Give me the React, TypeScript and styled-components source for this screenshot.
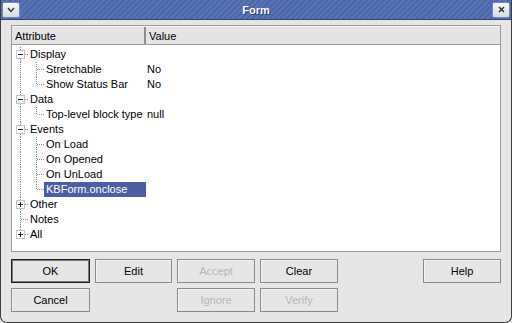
import styled, { createGlobalStyle } from 'styled-components';

type Guide = 'pipe' | 'tee' | 'elbow';

interface Node {
  label: string;
  value?: string;
  guides: Guide[];
  expander?: '+' | '-';
  selected?: boolean;
}

const nodes: Node[] = [
  { label: 'Display', guides: ['tee'], expander: '-' },
  { label: 'Stretchable', value: 'No', guides: ['pipe', 'tee'] },
  { label: 'Show Status Bar', value: 'No', guides: ['pipe', 'elbow'] },
  { label: 'Data', guides: ['tee'], expander: '-' },
  { label: 'Top-level block type', value: 'null', guides: ['pipe', 'elbow'] },
  { label: 'Events', guides: ['tee'], expander: '-' },
  { label: 'On Load', guides: ['pipe', 'tee'] },
  { label: 'On Opened', guides: ['pipe', 'tee'] },
  { label: 'On UnLoad', guides: ['pipe', 'tee'] },
  { label: 'KBForm.onclose', guides: ['pipe', 'elbow'], selected: true },
  { label: 'Other', guides: ['tee'], expander: '+' },
  { label: 'Notes', guides: ['tee'] },
  { label: 'All', guides: ['elbow'], expander: '+' },
];

const GlobalStyle = createGlobalStyle`
  html, body {
    margin: 0;
    padding: 0;
    background: #e6e6e6;
  }
  body {
    width: 512px;
    height: 323px;
    overflow: hidden;
    font-family: "Liberation Sans", Arial, sans-serif;
    font-size: 11px;
    color: #000;
  }
`;

const Window = styled.div`
  width: 512px;
  height: 323px;
  box-sizing: border-box;
  display: flex;
  flex-direction: column;
  background: #e6e6e6;
  border: 1px solid #3c3c3c;
  border-top: none;
  border-radius: 0 0 7px 7px;
  overflow: hidden;
`;

const TitleBar = styled.div`
  height: 19px;
  display: flex;
  align-items: center;
  gap: 2px;
  padding: 0 1px;
  background: repeating-linear-gradient(135deg, #5874b4 0 2px, #4c68aa 2px 4px);
  border-bottom: 1px solid #2d4380;
`;

const TitleButton = styled.div`
  width: 16px;
  height: 14px;
  display: flex;
  align-items: center;
  justify-content: center;
  border: 1px solid #7486b0;
  border-radius: 2px;
  background: linear-gradient(#f6f7fa, #d6dae4);
`;

const Title = styled.div`
  flex: 1;
  text-align: center;
  color: #fff;
  font-weight: bold;
  font-size: 11px;
  text-shadow: 1px 1px 0 #28386a;
`;

const Body = styled.div`
  flex: 1;
  display: flex;
  flex-direction: column;
  padding: 5px 10px 0 10px;
`;

const Table = styled.div`
  height: 227px;
  box-sizing: border-box;
  border: 1px solid #9a9a9a;
  background: #fff;
  display: flex;
  flex-direction: column;
`;

const Header = styled.div`
  display: grid;
  grid-template-columns: 134px 1fr;
  height: 19px;
  box-sizing: border-box;
  background: #e4e4e4;
  border-top: 1px solid #f6f6f6;
  border-bottom: 1px solid #9a9a9a;
`;

const HeaderCell = styled.div<{ $divider?: boolean }>`
  display: flex;
  align-items: center;
  padding-left: 3px;
  border-right: ${p => (p.$divider ? '2px solid #8c8c8c' : 'none')};
`;

const Rows = styled.div`
  padding-top: 2px;
`;

const Row = styled.div`
  display: grid;
  grid-template-columns: 134px 1fr;
  height: 15px;
  line-height: 15px;
`;

const NameCell = styled.div`
  display: flex;
  height: 15px;
`;

const dots = (dir: string) =>
  `repeating-linear-gradient(${dir}, #8a8a8a 0 1px, transparent 1px 2px)`;

const GuideCell = styled.span<{ $kind: Guide }>`
  position: relative;
  width: 16px;
  flex: none;

  &::before {
    content: '';
    position: absolute;
    left: 8px;
    top: 0;
    width: 1px;
    height: ${p => (p.$kind === 'elbow' ? '8px' : '15px')};
    background: ${dots('to bottom')};
  }

  &::after {
    content: '';
    display: ${p => (p.$kind === 'pipe' ? 'none' : 'block')};
    position: absolute;
    left: 9px;
    top: 7px;
    width: 7px;
    height: 1px;
    background: ${dots('to right')};
  }
`;

const Expander = styled.svg`
  position: absolute;
  left: 4px;
  top: 3px;
  z-index: 1;
`;

const Label = styled.span<{ $selected?: boolean }>`
  flex: 1;
  padding-left: 2px;
  white-space: nowrap;
  background: ${p => (p.$selected ? '#4b5ea6' : 'transparent')};
  color: ${p => (p.$selected ? '#fff' : '#000')};
`;

const ValueCell = styled.div`
  padding-left: 1px;
  white-space: nowrap;
`;

const Buttons = styled.div`
  margin-top: 7px;
  display: grid;
  grid-template-columns: 79px 77px 78px 78px 1fr 78px;
  grid-template-rows: 24px 24px;
  column-gap: 5px;
  row-gap: 5px;
`;

const Button = styled.button<{ $default?: boolean; $col: number; $row: number }>`
  grid-column: ${p => p.$col};
  grid-row: ${p => p.$row};
  font-family: "Liberation Sans", Arial, sans-serif;
  font-size: 11px;
  padding: 0;
  margin: 0;
  border: 1px solid ${p => (p.$default ? '#1e1e1e' : '#8a8a8a')};
  box-shadow: ${p => (p.$default ? 'inset 0 0 0 1px #7a7a7a' : 'inset 1px 1px 0 #f4f4f4')};
  background: #e6e6e6;
  color: #000;
  border-radius: 0;

  &:disabled {
    color: #b6b6b6;
  }
`;

function ExpanderIcon({ sign }: { sign: '+' | '-' }) {
  return (
    <Expander width="9" height="9" viewBox="0 0 9 9">
      <rect x="0.5" y="0.5" width="8" height="8" fill="#fff" stroke="#c4c4c4" />
      <line x1="2" y1="4.5" x2="7" y2="4.5" stroke="#222" />
      {sign === '+' && <line x1="4.5" y1="2" x2="4.5" y2="7" stroke="#222" />}
    </Expander>
  );
}

export default function App() {
  return (
    <>
      <GlobalStyle />
      <Window>
        <TitleBar>
          <TitleButton>
            <svg width="8" height="6" viewBox="0 0 8 6">
              <path d="M1 1 L4 4.5 L7 1" fill="none" stroke="#333" strokeWidth="1.4" />
            </svg>
          </TitleButton>
          <Title>Form</Title>
          <TitleButton>
            <svg width="7" height="7" viewBox="0 0 7 7">
              <path d="M1 1 L6 6 M6 1 L1 6" stroke="#333" strokeWidth="1.5" />
            </svg>
          </TitleButton>
        </TitleBar>
        <Body>
          <Table>
            <Header>
              <HeaderCell $divider>Attribute</HeaderCell>
              <HeaderCell>Value</HeaderCell>
            </Header>
            <Rows>
              {nodes.map(n => (
                <Row key={n.label}>
                  <NameCell>
                    {n.guides.map((g, i) => (
                      <GuideCell key={i} $kind={g}>
                        {i === 0 && n.expander && <ExpanderIcon sign={n.expander} />}
                      </GuideCell>
                    ))}
                    <Label $selected={n.selected}>{n.label}</Label>
                  </NameCell>
                  <ValueCell>{n.value}</ValueCell>
                </Row>
              ))}
            </Rows>
          </Table>
          <Buttons>
            <Button $default $col={1} $row={1}>OK</Button>
            <Button $col={2} $row={1}>Edit</Button>
            <Button $col={3} $row={1} disabled>Accept</Button>
            <Button $col={4} $row={1}>Clear</Button>
            <Button $col={6} $row={1}>Help</Button>
            <Button $col={1} $row={2}>Cancel</Button>
            <Button $col={3} $row={2} disabled>Ignore</Button>
            <Button $col={4} $row={2} disabled>Verify</Button>
          </Buttons>
        </Body>
      </Window>
    </>
  );
}
